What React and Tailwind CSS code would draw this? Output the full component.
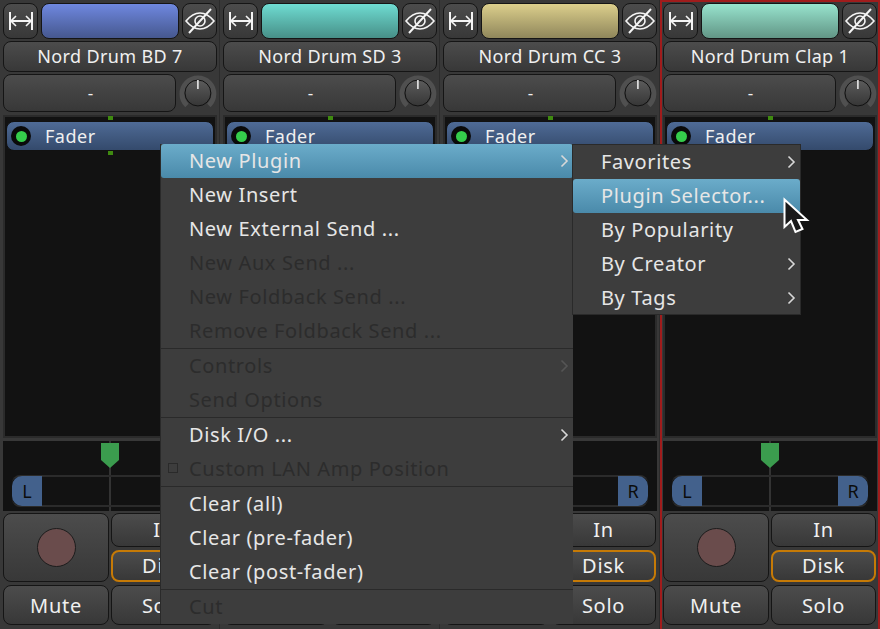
import React from "react";

const font = "font-['Noto_Sans',sans-serif]";
const btn =
  "rounded-[8px] border border-[#151515] bg-gradient-to-b from-[#4c4c4c] to-[#383838] text-[#f0f0f0] flex items-center justify-center";
const blueRow = "bg-gradient-to-b from-[#6bacca] to-[#4a8aaa]";

const strips = [
  { name: "Nord Drum BD 7", color: "from-[#6f88e0] to-[#46588f]", left: true },
  { name: "Nord Drum SD 3", color: "from-[#6fdcd2] to-[#479088]" },
  { name: "Nord Drum CC 3", color: "from-[#dccf8c] to-[#90875b]", right: true },
  { name: "Nord Drum Clap 1", color: "from-[#98e4ce] to-[#629686]", left: true, right: true, selected: true },
];

const WidthIcon = () => (
  <svg width="26" height="20" viewBox="0 0 26 20" fill="none" stroke="#f4f4f4" strokeWidth="2">
    <path d="M2 1v18M24 1v18M3 10h20" />
    <path d="M8 5l-5 5 5 5M18 5l5 5-5 5" strokeWidth="1.6" />
  </svg>
);

const EyeIcon = () => (
  <svg width="30" height="26" viewBox="0 0 30 26" fill="none" stroke="#f4f4f4" strokeWidth="1.6">
    <path d="M1 13C6 7 10 5 15 5s9 2 14 8c-5 6-9 8-14 8S6 19 1 13z" />
    <circle cx="15" cy="13" r="5" />
    <path d="M26 1L4 25" strokeWidth="2" />
  </svg>
);

const Knob = () => (
  <svg width="38" height="38" viewBox="0 0 38 38">
    <defs>
      <linearGradient id="knob" x1="0" y1="0" x2="0" y2="1">
        <stop offset="0" stopColor="#5c5c5c" />
        <stop offset="1" stopColor="#363636" />
      </linearGradient>
    </defs>
    <path d="M8 31.5A16 16 0 1 1 30 31.5" fill="none" stroke="#505050" strokeWidth="5" />
    <circle cx="19" cy="19" r="13" fill="url(#knob)" stroke="#111" strokeWidth="1" />
    <path d="M19 6v9" stroke="#f4f4f4" strokeWidth="1.5" />
  </svg>
);

const Strip = ({ strip }) => (
  <div
    className={`w-[220px] shrink-0 h-[640px] flex flex-col px-[3px] pt-[3px] bg-[#383838] border-r border-[#2c2c2c] ${
      strip.selected ? "outline-2 -outline-offset-2 outline-[#a01c1c]" : ""
    }`}
  >
    <div className="flex gap-[3px] w-[214px] h-[36px]">
      <div className={`${btn} w-[35px]`}>
        <WidthIcon />
      </div>
      <div className={`flex-1 rounded-[8px] border border-[#151515] bg-gradient-to-b ${strip.color}`} />
      <div className={`${btn} w-[35px]`}>
        <EyeIcon />
      </div>
    </div>
    <div className={`${btn} w-[214px] h-[31px] mt-[2px] text-[18px] tracking-[0.35px]`}>{strip.name}</div>
    <div className="flex w-[214px] h-[38px] mt-[2px] items-center gap-[3px]">
      <div className={`${btn} w-[174px] h-full text-[17px] pl-[2px]`}>-</div>
      <Knob />
    </div>
    <div className="w-[214px] h-[323px] mt-[3px] bg-[#121212] border-2 border-[#2b2b2b] relative px-[1px] pt-[4px]">
      <div className="absolute left-[103px] -top-[1px] w-[5px] h-[4px] bg-[#3f8a10]" />
      <div className="h-[30px] rounded-[8px] bg-gradient-to-b from-[#4f6b96] to-[#344a6c] border border-[#111] flex items-center text-[18px] tracking-[0.5px] text-[#f0f0f0] pl-[4px]">
        <span className="w-[20px] h-[20px] rounded-full bg-[#0a0a0a] flex items-center justify-center mr-[14px]">
          <span className="w-[11px] h-[11px] rounded-full bg-[#35cc4b]" />
        </span>
        Fader
      </div>
      <div className="absolute left-[103px] top-[34px] w-[5px] h-[4px] bg-[#3f8a10]" />
    </div>
    <div className="w-[214px] h-[70px] mt-[3px] bg-[#121212] relative">
      <div className="absolute left-[106px] top-0 bottom-0 w-[2px] bg-[#333]" />
      <div className="absolute left-[9px] right-[9px] top-[34px] h-[32px] border-y-2 border-[#2b2b2b] rounded-[8px]" />
      {strip.left && (
        <div className="absolute left-[9px] top-[35px] w-[30px] h-[30px] rounded-l-[10px] bg-[#43618c] text-[#0c0c0c] text-[18px] flex items-center justify-center">
          L
        </div>
      )}
      {strip.right && (
        <div className="absolute right-[9px] top-[35px] w-[30px] h-[30px] rounded-r-[10px] bg-[#43618c] text-[#0c0c0c] text-[18px] flex items-center justify-center">
          R
        </div>
      )}
      <svg className="absolute left-[98px] top-[2px]" width="18" height="25" viewBox="0 0 18 25">
        <path d="M0 0h18v17l-9 8-9-8z" fill="#3b9c4e" />
      </svg>
    </div>
    <div className="grid grid-cols-[106px_105px] grid-rows-[34px_32px_40px] gap-y-[3px] gap-x-[2px] w-[214px] mt-[2px] text-[20px] tracking-[0.7px]">
      <div className={`${btn} row-span-2`}>
        <span className="w-[39px] h-[39px] rounded-full bg-[#6a4c4c] border border-[#1c1c1c]" />
      </div>
      <div className={btn}>In</div>
      <div className={`${btn} border-2 border-[#c67a06]`}>Disk</div>
      <div className={`${btn} pt-[2px]`}>Mute</div>
      <div className={`${btn} pt-[2px]`}>Solo</div>
    </div>
  </div>
);

const Chevron = ({ color = "#d8d8d8" }) => (
  <svg width="9" height="14" viewBox="0 0 9 14" fill="none" stroke={color} strokeWidth="1.6">
    <path d="M1.5 1.5L7 7l-5.5 5.5" />
  </svg>
);

const Row = ({ label, active, disabled, arrow, check }) => (
  <div
    className={`h-[34px] flex items-center justify-between rounded-[3px] text-[20px] tracking-[0.62px] pl-[28px] pr-[4px] ${
      active ? blueRow : ""
    } ${disabled ? "text-[#2c2c2c]" : "text-[#e6e6e6]"}`}
  >
    <span className="relative">
      {check && <span className="absolute -left-[21px] top-[9px] w-[10px] h-[10px] border border-[#2a2a2a]" />}
      {label}
    </span>
    {arrow && <Chevron color={disabled ? "#555" : "#d8d8d8"} />}
  </div>
);

const mainMenu = [
  { label: "New Plugin", active: true, arrow: true },
  { label: "New Insert" },
  { label: "New External Send ..." },
  { label: "New Aux Send ...", disabled: true },
  { label: "New Foldback Send ...", disabled: true },
  { label: "Remove Foldback Send ...", disabled: true },
  "sep",
  { label: "Controls", disabled: true, arrow: true },
  { label: "Send Options", disabled: true },
  "sep",
  { label: "Disk I/O ...", arrow: true },
  { label: "Custom LAN Amp Position", disabled: true, check: true },
  "sep",
  { label: "Clear (all)" },
  { label: "Clear (pre-fader)" },
  { label: "Clear (post-fader)" },
  "sep",
  { label: "Cut", disabled: true },
];

const subMenu = [
  { label: "Favorites", arrow: true },
  { label: "Plugin Selector...", active: true },
  { label: "By Popularity" },
  { label: "By Creator", arrow: true },
  { label: "By Tags", arrow: true },
];

export default function App() {
  return (
    <div className={`w-[880px] h-[629px] overflow-hidden relative bg-[#383838] ${font}`}>
      <div className="flex">
        {strips.map((s) => (
          <Strip key={s.name} strip={s} />
        ))}
      </div>

      {/* context menu */}
      <div className="absolute left-[160px] top-[144px] w-[413px] bg-[#3d3d3d] border-l border-[#2a2a2a]">
        {mainMenu.map((item, i) =>
          item === "sep" ? <div key={i} className="h-[1px] bg-[#2a2a2a]" /> : <Row key={i} {...item} />
        )}
      </div>

      <div className="absolute left-[572px] top-[144px] w-[229px] h-[171px] bg-[#3d3d3d] border border-[#2a2a2a]">
        {subMenu.map((item) => (
          <Row key={item.label} {...item} />
        ))}
      </div>

      {/* mouse pointer */}
      <svg className="absolute left-[780px] top-[195px]" width="32" height="44" viewBox="0 0 32 44">
        <path d="M4.5 4.5V32l6.5-6 4.5 11 7-3-4.5-9H27z" fill="#1a1a1a" stroke="#fff" strokeWidth="2" />
      </svg>
    </div>
  );
}
